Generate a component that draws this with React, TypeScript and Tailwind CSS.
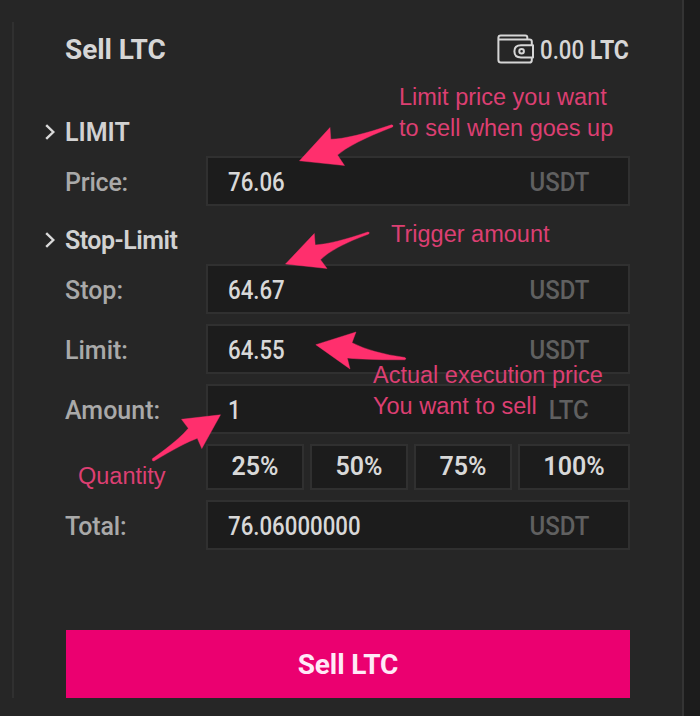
import React from 'react'

const Chevron = () => (
    <svg className="w-[10px] h-[16px] mr-[10px]" viewBox="0 0 10 16" fill="none" stroke="#dadada" strokeWidth="2.4">
        <path d="M1.2 1.2 L8.3 8 L1.2 14.8" />
    </svg>
)

const WalletIcon = () => (
    <svg className="w-[38px] h-[30px]" viewBox="0 0 38 30" fill="none" stroke="#d6d6d6" strokeWidth="2" strokeLinejoin="round">
        <path d="M30.3 5.2 V3.4 Q30.3 1.4 28.3 1.4 H3.8 Q1.4 1.4 1.4 3.8 V26 Q1.4 28.6 4 28.6 H32.4 Q34.8 28.6 34.8 26.2 V23.6" />
        <path d="M1.6 5.4 H32.6 Q34.8 5.4 34.8 7.6 V11" />
        <path d="M36 11.2 H24 Q17.4 11.2 17.4 17.2 Q17.4 23.4 24 23.4 H36 Z" />
        <circle cx="24.6" cy="17.2" r="2.3" />
    </svg>
)

const Section = ({ title, tracking }: { title: string; tracking: string }) => (
    <div className="flex items-center h-8 -ml-[20px] text-[25px] font-semibold text-[#d2d2d2]">
        <Chevron />
        <h3 className={`pt-[2px] ${tracking}`}>{title}</h3>
    </div>
)

interface FieldProps {
    label: string
    value: string
    unit: string
    tracking: string
}

const Field = ({ label, value, unit, tracking }: FieldProps) => (
    <div className="flex items-center h-[50px]">
        <label className={`w-[141px] shrink-0 pt-[3px] text-[25px] font-medium text-[#a9a9a9] ${tracking}`}>{label}</label>
        <div className="flex flex-1 h-full items-center justify-between border-2 border-[#303030] bg-[#1c1c1c] pl-5 pr-[39px] pt-[3px] font-medium">
            <span className="origin-left scale-x-[0.89] text-[25px] text-[#d8d8d8]">{value}</span>
            <span className="origin-right scale-x-[0.96] text-[25px] text-[#606060]">{unit}</span>
        </div>
    </div>
)

// Arrows drawn over the form, pointing at the fields
const Arrows = () => (
    <svg className="absolute left-0 top-0 w-[700px] h-[716px] pointer-events-none" viewBox="0 0 700 716" fill="#ff2f6d" stroke="#ff2f6d" strokeWidth="0.4">
        <path d="M299.5 160.8 L330 127.5 L330.8 139.3 Q350 139 391.5 124.8 Q394 125.2 392.5 127 Q351 143 337.5 155 L344.5 165.5 Z" />
        <path d="M285.5 264 L314.3 233.5 L315.2 245 Q333 244 367.8 232 Q370.2 232.2 368.7 234 Q333 247 320.5 259.7 L327 268.5 Z" />
        <path d="M315.8 344.7 L356 332 L352 342.7 Q372 353 405 357.5 Q407 359 404.7 359.8 Q366 360 347.3 358 L350 369 Z" />
        <path d="M220.5 414.8 L181.5 419.3 L188.3 428.3 Q180 439 152.3 458.8 Q151.6 461.2 154 461 Q184 443 197.3 438.3 L201.8 448.6 Z" />
    </svg>
)

const App = () => {
    return (
        <div className="relative flex w-[700px] h-[716px] overflow-hidden bg-[#262626] font-['Roboto','Liberation_Sans',sans-serif] whitespace-nowrap">
            <div className="w-[2px] h-[676px] mt-[22px] ml-3 bg-[#303030]"></div>
            <div className="flex flex-col w-[616px] pl-[51px]">
                <div className="flex items-center justify-between h-10 mt-[29px]">
                    <h2 className="pt-px text-[28px] font-bold tracking-[-0.1px] text-[#d6d6d6]">Sell LTC</h2>
                    <div className="flex items-center gap-[5px] text-[25px] text-[#d6d6d6]">
                        <WalletIcon />
                        <div className="flex w-[90px] pt-[3px]">
                            <span className="w-[51px] origin-left scale-x-[0.89] font-medium">0.00</span>
                            <span className="origin-left scale-x-[0.92] font-bold">LTC</span>
                        </div>
                    </div>
                </div>

                <div className="mt-[47px]">
                    <Section title="LIMIT" tracking="tracking-normal" />
                </div>
                <div className="mt-2">
                    <Field label="Price:" value="76.06" unit="USDT" tracking="tracking-[-0.2px]" />
                </div>

                <div className="mt-[18px]">
                    <Section title="Stop-Limit" tracking="tracking-[-0.5px]" />
                </div>
                <div className="flex flex-col gap-[10px] mt-2">
                    <Field label="Stop:" value="64.67" unit="USDT" tracking="tracking-normal" />
                    <Field label="Limit:" value="64.55" unit="USDT" tracking="tracking-normal" />
                    <Field label="Amount:" value="1" unit="LTC" tracking="tracking-normal" />
                    <div className="grid grid-cols-[98px_98px_98px_112px] gap-[6px] ml-[141px] h-[46px]">
                        {['25%', '50%', '75%', '100%'].map((pct) => (
                            <button key={pct} className="border-2 border-[#303030] bg-[#1c1c1c] pb-[2px] text-[25px] leading-none font-semibold text-[#d8d8d8]">
                                {pct}
                            </button>
                        ))}
                    </div>
                    <Field label="Total:" value="76.06000000" unit="USDT" tracking="tracking-[-0.2px]" />
                </div>

                <button className="w-[564px] h-[68px] mt-20 ml-px pt-px bg-[#eb0070] text-[28px] font-bold tracking-[-0.1px] text-[#ffe9f7]">
                    Sell LTC
                </button>
            </div>
            <div className="w-[18px] h-full ml-auto border-l-2 border-[#343434] bg-[#1c1c1c]"></div>

            <Arrows />
            <div className="font-['Liberation_Sans',sans-serif] text-[23.5px] leading-[31px] text-[#dc3f72]">
                <p className="absolute left-[399px] top-[82px]">
                    Limit price you want <br />
                    to sell when goes up
                </p>
                <p className="absolute left-[391px] top-[219px]">Trigger amount</p>
                <p className="absolute left-[373px] top-[360px]">
                    Actual execution price <br />
                    You want to sell
                </p>
                <p className="absolute left-[78px] top-[461px]">Quantity</p>
            </div>
        </div>
    )
}

export default App
